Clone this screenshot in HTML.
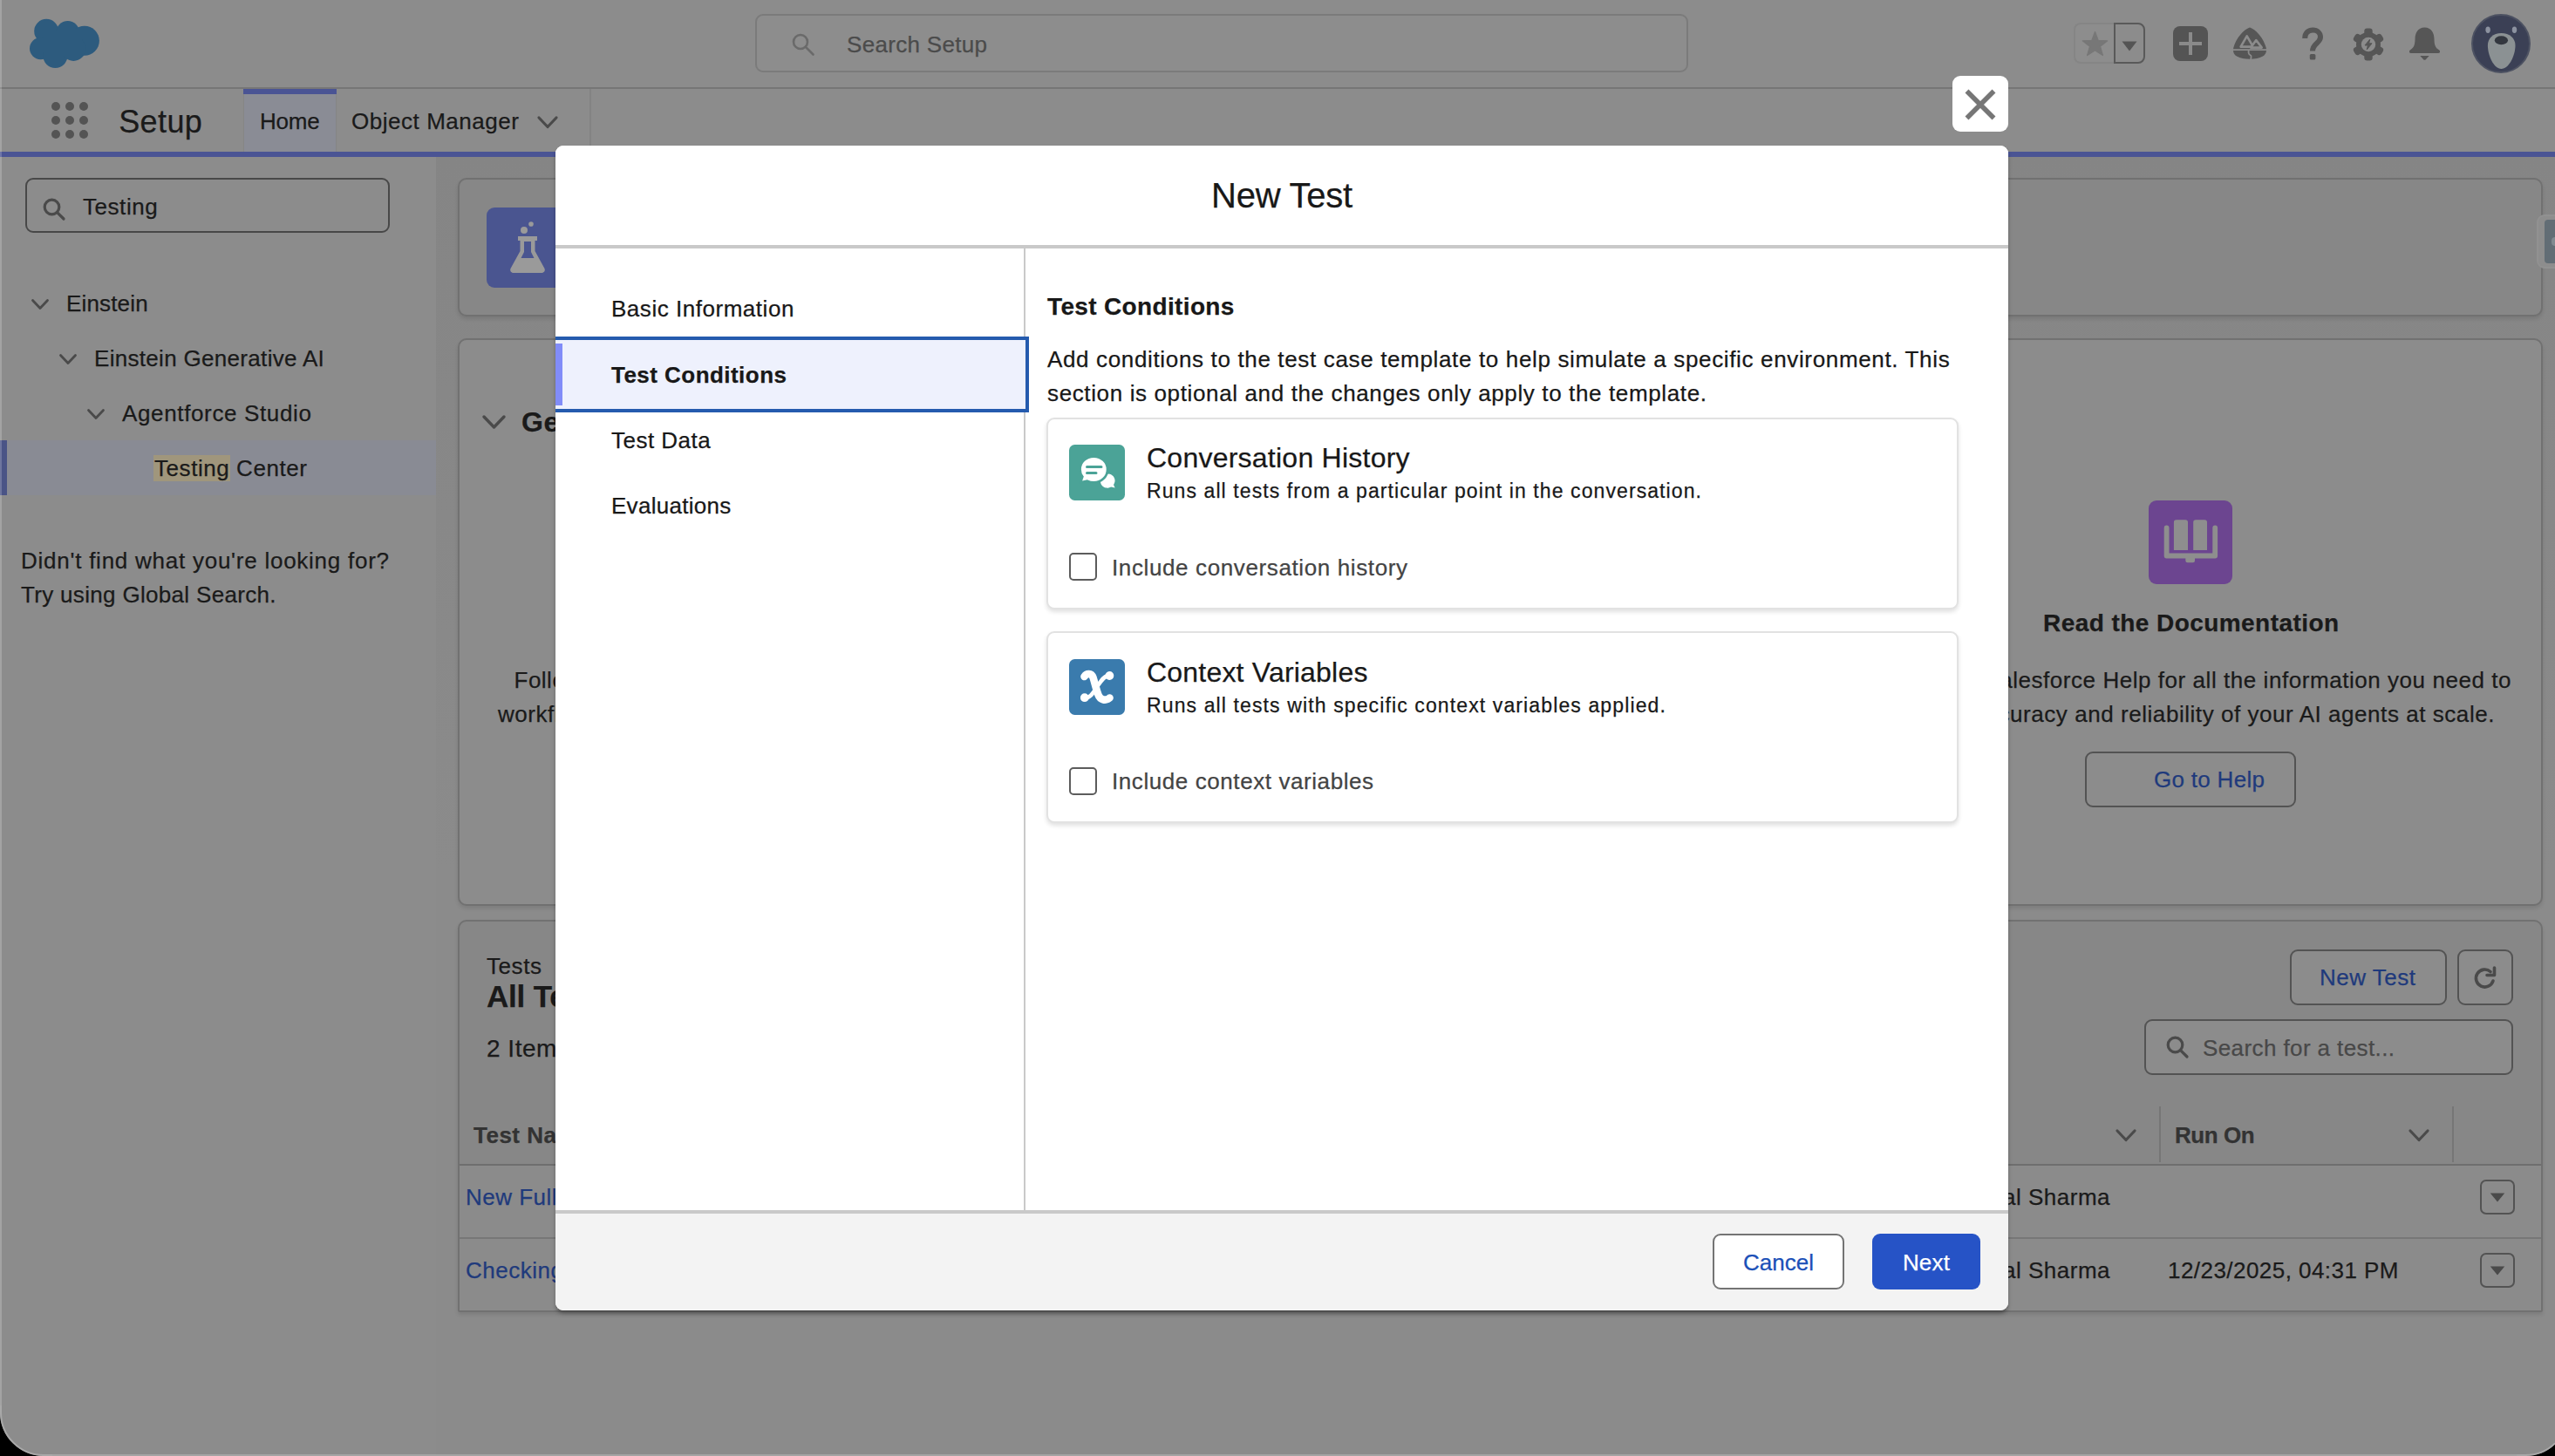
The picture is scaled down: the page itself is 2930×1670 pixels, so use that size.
<!DOCTYPE html>
<html lang="en">
<head>
<meta charset="utf-8">
<title>New Test - Testing Center | Salesforce</title>
<style>
:root{
  --bg:#8c8c8c;      /* dimmed white */
  --bg2:#8a8a8a;     /* dimmed page grey */
  --line:#717171;    /* dimmed light border */
  --dline:#464646;   /* dimmed dark border */
  --txt:#1a1a1a;     /* dimmed body text */
  --txt2:#3c3c3c;    /* dimmed secondary text */
  --ico:#565656;     /* dimmed icon grey */
  --lnk:#1f3a7c;     /* dimmed link */
  --brand:#4a5494;   /* dimmed brand purple-blue */
}
*{box-sizing:border-box;margin:0;padding:0}
html,body{width:2930px;height:1670px;overflow:hidden;background:#000}
body{font-family:"Liberation Sans",sans-serif;color:var(--txt);font-size:26px;position:relative}
#win{position:absolute;left:0;top:0;width:2930px;height:1670px;background:linear-gradient(#858585 180px,#8b8b8b 1000px);overflow:hidden}
.a{position:absolute}
.t{position:absolute;white-space:nowrap;line-height:40px;height:40px;-webkit-text-stroke:.25px currentColor}
.b{font-weight:bold}
svg{position:absolute;overflow:visible}
/* ---------- dimmed page ---------- */
#hdr{left:0;top:0;width:2930px;height:100px;background:var(--bg)}
#hdrline{left:0;top:100px;width:2930px;height:2px;background:#767676}
#nav{left:0;top:102px;width:2930px;height:72px;background:var(--bg)}
#navline{left:0;top:174px;width:2930px;height:6px;background:var(--brand)}
#side{left:0;top:180px;width:500px;height:1490px;background:var(--bg)}
.card{position:absolute;background:var(--bg);border:2px solid var(--line);border-radius:10px;box-shadow:0 3px 4px rgba(0,0,0,.10)}
/* ---------- modal ---------- */
#modal{left:637px;top:167px;width:1666px;height:1336px;background:#fff;border-radius:9px;overflow:hidden;box-shadow:0 4px 5px -1px rgba(0,0,0,.4)}
#mhead{left:0;top:0;width:1666px;height:114px;background:#fff}
#mheadline{left:0;top:114px;width:1666px;height:4px;background:#c9c9c9}
#mfoot{left:0;top:1221px;width:1666px;height:115px;background:#f3f3f3;border-top:4px solid #c9c9c9}
#mvline{left:537px;top:118px;width:2px;height:1103px;background:#c9c9c9}
.mc{border:2px solid #e2e2e2;border-radius:9px;background:#fff;box-shadow:0 3px 5px rgba(0,0,0,.12)}
.cb{width:32px;height:32px;border:2px solid #5c5c5c;border-radius:5px;background:#fff}
</style>
</head>
<body>
<div id="win">

<!-- ================= DIMMED PAGE ================= -->
<div class="a" id="hdr"></div>
<div class="a" id="hdrline"></div>
<div class="a" id="nav"></div>
<div class="a" id="navline"></div>
<div class="a" id="side"></div>

<!-- HEADER-CONTENT -->
<svg style="left:34px;top:22px" width="80" height="56" viewBox="34 22 80 56">
  <g fill="#2d5b7e">
    <circle cx="53.2" cy="35.8" r="14"/><circle cx="77.7" cy="37.5" r="13.5"/><circle cx="96.9" cy="46.8" r="17"/>
    <circle cx="46.6" cy="55.6" r="12.6"/><circle cx="63.4" cy="64.1" r="14"/><circle cx="84.3" cy="55.9" r="14"/>
    <rect x="50" y="36" width="44" height="28"/>
  </g>
</svg>
<div class="a" style="left:866px;top:16px;width:1070px;height:67px;border:2px solid #7b7b7b;border-radius:9px;background:#8d8d8d"></div>
<svg style="left:908px;top:38px" width="26" height="26" viewBox="0 0 26 26" fill="none" stroke="#6a6a6a" stroke-width="2.6"><circle cx="10" cy="10" r="8"/><path d="M16 16 L24.5 24.5" stroke-linecap="round"/></svg>
<div class="t" style="left:971px;top:31px;color:#4b4b4b;letter-spacing:0.31px">Search Setup</div>
<!-- favorites -->
<div class="a" style="left:2378px;top:26px;width:47px;height:47px;border:2px solid #858585;border-right:none;border-radius:8px 0 0 8px;background:#8d8d8d"></div>
<div class="a" style="left:2424px;top:26px;width:36px;height:47px;border:2px solid #595959;border-radius:0 8px 8px 0"></div>
<svg style="left:2386.5px;top:33px" width="31" height="34" viewBox="0 0 30 29"><path fill="#777" stroke="#777" stroke-width="1.2" stroke-linejoin="round" d="M15 1.5 L18.6 11 L28.8 11.4 L20.8 17.7 L23.6 27.6 L15 21.9 L6.4 27.6 L9.2 17.7 L1.2 11.4 L11.4 11 Z"/></svg>
<svg style="left:2433px;top:47px" width="18" height="12" viewBox="0 0 18 12"><path fill="#545454" d="M0.5 0.5 H17.5 L9 11.5 Z"/></svg>
<!-- plus -->
<div class="a" style="left:2492px;top:30px;width:40px;height:40px;border-radius:8px;background:#545454"></div>
<div class="a" style="left:2499px;top:48.3px;width:26px;height:3.4px;background:#8a8a8a"></div>
<div class="a" style="left:2510.3px;top:37px;width:3.4px;height:26px;background:#8a8a8a"></div>
<!-- trailhead -->
<svg style="left:2561px;top:32px" width="38" height="36" viewBox="0 0 38 36">
  <path fill="#565656" d="M19 -0.6 C26 1.5 35 12 37.8 23 C38.6 27.5 37 31 33.5 32.8 C27 36.8 11 36.8 4.5 32.8 C1 31 -0.6 27.5 0.2 23 C3 12 12 1.5 19 -0.6 Z"/>
  <path fill="#565656" stroke="#8c8c8c" stroke-width="2.6" stroke-linejoin="round" d="M15.7 9.3 L8.6 21.6 H22.8 Z"/>
  <path fill="#565656" stroke="#8c8c8c" stroke-width="2.6" stroke-linejoin="round" d="M26.3 14 L20.2 22.6 H32.7 Z"/>
  <path fill="none" stroke="#8c8c8c" stroke-width="1.8" d="M0 25.2 H38 M17.6 25.2 V28.5 C17.6 31.5 21 30.5 20.6 33 L20.2 36"/>
</svg>
<!-- help -->
<svg style="left:2639px;top:31px" width="26" height="39" viewBox="0 0 26 39"><path fill="none" stroke="#565656" stroke-width="6" stroke-linecap="butt" d="M4.2 13 C4.2 6.5 8.5 3.5 13.3 3.5 C18.6 3.5 22 7 22 11.5 C22 18.5 13 18.5 13 27.5"/><rect x="9.8" y="31" width="6.6" height="6.6" rx="1.6" fill="#565656"/></svg>
<!-- gear -->
<svg style="left:2698px;top:32px" width="36" height="38" viewBox="-18 -19 36 38">
  <g fill="#565656"><circle r="14"/>
  <g id="gt"><rect x="-4.7" y="-18.4" width="9.4" height="9" rx="3.2"/></g>
  <use href="#gt" transform="rotate(60)"/><use href="#gt" transform="rotate(120)"/><use href="#gt" transform="rotate(180)"/><use href="#gt" transform="rotate(240)"/><use href="#gt" transform="rotate(300)"/></g>
  <circle r="8.2" fill="#8c8c8c"/>
  <path fill="#565656" stroke="#565656" stroke-width="1" stroke-linejoin="round" d="M1.8 -6 L-4 1 H-0.6 L-1.8 6 L4 -1.2 H0.6 Z"/>
</svg>
<!-- bell -->
<svg style="left:2761px;top:31px" width="40" height="40" viewBox="0 0 40 40"><path fill="#565656" d="M19.5 0.5 C27.5 0.5 30.5 7 30.5 14 C30.5 22 33 24.5 36.3 26.6 C37.6 27.8 37.3 30 35.2 30 H3.8 C1.7 30 1.4 27.8 2.7 26.6 C6 24.5 8.5 22 8.5 14 C8.5 7 11.5 0.5 19.5 0.5 Z M14.3 33 H24.7 L20.6 37.4 C20 38 19 38 18.4 37.4 Z"/></svg>
<!-- avatar -->
<div class="a" style="left:2834px;top:16px;width:68px;height:68px;border-radius:50%;background:#3b4055;border:2px solid #4d5262;overflow:hidden">
  <svg style="left:0;top:0" width="64" height="64" viewBox="0 0 64 64">
    <ellipse cx="17.1" cy="16.3" rx="2.7" ry="3.7" fill="#8c92a0"/><ellipse cx="47.5" cy="16.3" rx="2.7" ry="3.7" fill="#8c92a0"/>
    <path fill="#8b9193" d="M32.4 20 C42 20 48.5 26 48.5 34 C48.5 46 41 61 32.4 61 C24 61 16.9 46 16.9 34 C16.9 26 23 20 32.4 20 Z"/>
    <ellipse cx="32.4" cy="28.2" rx="7.6" ry="5" fill="#33373f"/>
  </svg>
</div>

<!-- NAV-CONTENT -->
<svg style="left:59px;top:117px" width="42" height="42" viewBox="0 0 42 42" fill="#545454">
  <circle cx="5" cy="5" r="5"/><circle cx="21" cy="5" r="5"/><circle cx="37" cy="5" r="5"/>
  <circle cx="5" cy="21" r="5"/><circle cx="21" cy="21" r="5"/><circle cx="37" cy="21" r="5"/>
  <circle cx="5" cy="37" r="5"/><circle cx="21" cy="37" r="5"/><circle cx="37" cy="37" r="5"/>
</svg>
<div class="t" style="left:136.2px;top:120px;font-size:36px;letter-spacing:0.4px">Setup</div>
<div class="a" style="left:279px;top:102px;width:107px;height:72px;background:#8a8c95"></div>
<div class="a" style="left:279px;top:102px;width:107px;height:6px;background:var(--brand)"></div>
<div class="a" style="left:279px;top:108px;width:1px;height:66px;background:#858585"></div>
<div class="a" style="left:385px;top:108px;width:1px;height:66px;background:#858585"></div>
<div class="t" style="left:298px;top:119px;font-size:26px;letter-spacing:-0.19px">Home</div>
<div class="t" style="left:403px;top:119px;font-size:26px;letter-spacing:0.54px">Object Manager</div>
<svg style="left:616px;top:133px" width="24" height="15" viewBox="0 0 24 15" fill="none" stroke="#4a4a4a" stroke-width="3.2" stroke-linecap="round" stroke-linejoin="round"><path d="M2 2 L12 12.5 L22 2"/></svg>
<div class="a" style="left:676px;top:102px;width:2px;height:72px;background:#838383"></div>

<!-- SIDEBAR-CONTENT -->
<div class="a" style="left:29px;top:204px;width:418px;height:63px;border:2px solid #484848;border-radius:9px;background:#8c8c8c"></div>
<svg style="left:49px;top:227px" width="26" height="26" viewBox="0 0 26 26" fill="none" stroke="#4a4a4a" stroke-width="3.2"><circle cx="10.5" cy="10.5" r="8.3"/><path d="M16.8 16.8 L24 24" stroke-linecap="round"/></svg>
<div class="t" style="left:95px;top:217px;letter-spacing:0.55px">Testing</div>
<svg class="chev" style="left:36px;top:343px" width="20" height="13" viewBox="0 0 20 13" fill="none" stroke="#4a4a4a" stroke-width="2.8" stroke-linecap="round" stroke-linejoin="round"><path d="M1.5 1.5 L10 10.5 L18.5 1.5"/></svg>
<div class="t" style="left:76px;top:328px;letter-spacing:0.16px">Einstein</div>
<svg class="chev" style="left:68px;top:406px" width="20" height="13" viewBox="0 0 20 13" fill="none" stroke="#4a4a4a" stroke-width="2.8" stroke-linecap="round" stroke-linejoin="round"><path d="M1.5 1.5 L10 10.5 L18.5 1.5"/></svg>
<div class="t" style="left:108px;top:391px;letter-spacing:0.31px">Einstein Generative AI</div>
<svg class="chev" style="left:100px;top:469px" width="20" height="13" viewBox="0 0 20 13" fill="none" stroke="#4a4a4a" stroke-width="2.8" stroke-linecap="round" stroke-linejoin="round"><path d="M1.5 1.5 L10 10.5 L18.5 1.5"/></svg>
<div class="t" style="left:140px;top:454px;letter-spacing:0.64px">Agentforce Studio</div>
<div class="a" style="left:0;top:505px;width:500px;height:63px;background:#898b94"></div>
<div class="a" style="left:0;top:505px;width:8px;height:63px;background:#4a5486"></div>
<div class="a" style="left:176px;top:522px;width:88px;height:30px;background:#a0967c"></div>
<div class="t" style="left:177px;top:517px;letter-spacing:0.56px">Testing Center</div>
<div class="t" style="left:24px;top:623px;letter-spacing:0.75px">Didn't find what you're looking for?</div>
<div class="t" style="left:24px;top:662px;letter-spacing:0.32px">Try using Global Search.</div>

<!-- MAIN-CONTENT -->
<div class="card" style="left:525px;top:204px;width:2391px;height:159px;background:#878787"></div>
<div class="a" style="left:558px;top:238px;width:92px;height:92px;border-radius:9px;background:#4a5590"></div>
<svg style="left:582px;top:250.3px" width="46" height="64" viewBox="0 0 46 64">
  <g fill="#9a9a9a">
    <circle cx="19" cy="14" r="4"/><circle cx="27" cy="7" r="2.8"/>
    <path d="M12 21 H34 V26 H31.5 V38 L42.5 58 C43.5 60.5 42 63 39 63 H7 C4 63 2.5 60.5 3.5 58 L14.5 38 V26 H12 Z"/>
  </g>
  <path fill="#4a5590" d="M19 27 H27 V39 L30.5 46 H15.5 L19 39 Z"/>
</svg>
<div class="card" style="left:525px;top:388px;width:2391px;height:651px"></div>
<svg style="left:553px;top:476px" width="27" height="17" viewBox="0 0 27 17" fill="none" stroke="#4a4a4a" stroke-width="3.4" stroke-linecap="round" stroke-linejoin="round"><path d="M2 2 L13.5 14 L25 2"/></svg>
<div class="t b" style="left:598px;top:464px;font-size:32px;letter-spacing:.5px">Get Started</div>
<div class="t" style="left:589.5px;top:760px;letter-spacing:.5px">Follow</div>
<div class="t" style="left:571px;top:799px;letter-spacing:.5px">workflow</div>
<!-- docs tile -->
<div class="a" style="left:2464px;top:574px;width:96px;height:96px;border-radius:9px;background:#6c4590"></div>
<svg style="left:2480px;top:594px" width="64" height="52" viewBox="0 0 64 52">
  <path fill="#8e8e8e" d="M12.9 5 Q12.9 2.2 15.7 2.2 H26.2 Q29 2.2 29 5 V37 H12.9 Z M35.2 5 Q35.2 2.2 38 2.2 H48.2 Q51 2.2 51 5 V37 H35.2 Z"/>
  <path fill="none" stroke="#8e8e8e" stroke-width="5.8" stroke-linejoin="round" stroke-linecap="round" d="M4.6 11.5 V43.5 H60.2 V11.5"/>
  <path fill="#8e8e8e" d="M26.3 46 H37 V49 Q37 51.2 34.8 51.2 H28.5 Q26.3 51.2 26.3 49 Z"/>
</svg>
<div class="t b" style="left:2343px;top:695px;font-size:28px;letter-spacing:0.44px">Read the Documentation</div>
<div class="t" style="right:50px;top:760px;letter-spacing:.55px">Visit Salesforce Help for all the information you need to</div>
<div class="t" style="right:69px;top:799px;letter-spacing:.55px">ensure the accuracy and reliability of your AI agents at scale.</div>
<div class="a" style="left:2391px;top:862px;width:242px;height:64px;border:2px solid #535353;border-radius:9px"></div>
<div class="t" style="left:2470px;top:874px;color:var(--lnk);letter-spacing:0.3px">Go to Help</div>
<!-- tests card -->
<div class="card" style="left:525px;top:1055px;width:2391px;height:450px;border-radius:10px 10px 2px 2px;background:#878787"></div>
<div class="a" style="left:527px;top:1337px;width:2387px;height:166px;background:#8b8b8b"></div>
<div class="t" style="left:558px;top:1088px;letter-spacing:0.58px">Tests</div>
<div class="t b" style="left:558px;top:1123px;font-size:35px;letter-spacing:-.2px">All Tests</div>
<div class="t" style="left:558px;top:1183px;font-size:28px;letter-spacing:.5px">2 Items</div>
<div class="a" style="left:2626px;top:1089px;width:180px;height:64px;border:2px solid #535353;border-radius:9px;background:#8c8c8c"></div>
<div class="t" style="left:2660px;top:1101px;color:var(--lnk);letter-spacing:0.51px">New Test</div>
<div class="a" style="left:2818px;top:1089px;width:64px;height:64px;border:2px solid #535353;border-radius:9px;background:#8c8c8c"></div>
<svg style="left:2836px;top:1108px" width="28" height="28" viewBox="0 0 28 28" fill="none" stroke="#4a4a4a" stroke-width="3.6" stroke-linecap="round"><path d="M23 17 A10 10 0 1 1 20 6.5"/><path d="M24.5 2 V10.5 H16" stroke-linejoin="round"/></svg>
<div class="a" style="left:2459px;top:1169px;width:423px;height:64px;border:2px solid #535353;border-radius:9px;background:#8c8c8c"></div>
<svg style="left:2484px;top:1188px" width="26" height="26" viewBox="0 0 26 26" fill="none" stroke="#4a4a4a" stroke-width="3.2"><circle cx="10.5" cy="10.5" r="8.3"/><path d="M16.8 16.8 L24 24" stroke-linecap="round"/></svg>
<div class="t" style="left:2526px;top:1182px;color:#484848;letter-spacing:0.4px">Search for a test...</div>
<!-- table -->
<div class="a" style="left:527px;top:1335px;width:2387px;height:2px;background:#6e6e6e"></div>
<div class="a" style="left:527px;top:1419px;width:2387px;height:2px;background:#777"></div>
<div class="t b" style="left:543px;top:1282px;color:#333;letter-spacing:.5px">Test Name</div>
<svg style="left:2426px;top:1295px" width="24" height="15" viewBox="0 0 24 15" fill="none" stroke="#4a4a4a" stroke-width="3.2" stroke-linecap="round" stroke-linejoin="round"><path d="M2 2 L12 12.5 L22 2"/></svg>
<div class="a" style="left:2476px;top:1269px;width:2px;height:64px;background:#767676"></div>
<div class="t b" style="left:2494px;top:1282px;color:#333;letter-spacing:-0.46px">Run On</div>
<svg style="left:2762px;top:1295px" width="24" height="15" viewBox="0 0 24 15" fill="none" stroke="#4a4a4a" stroke-width="3.2" stroke-linecap="round" stroke-linejoin="round"><path d="M2 2 L12 12.5 L22 2"/></svg>
<div class="a" style="left:2812px;top:1269px;width:2px;height:64px;background:#767676"></div>
<div class="t" style="left:534px;top:1353px;color:var(--lnk);letter-spacing:.5px">New Full</div>
<div class="t" style="right:510px;top:1353px;letter-spacing:.5px">Vishal Sharma</div>
<div class="a" style="left:2844px;top:1353px;width:40px;height:40px;border:2px solid #535353;border-radius:7px"></div>
<svg style="left:2855px;top:1368px" width="18" height="11" viewBox="0 0 16 10"><path fill="#4a4a4a" d="M0.5 0.5 H15.5 L8 9.5 Z"/></svg>
<div class="t" style="left:534px;top:1437px;color:var(--lnk);letter-spacing:.5px">Checking</div>
<div class="t" style="right:510px;top:1437px;letter-spacing:.5px">Vishal Sharma</div>
<div class="t" style="left:2486px;top:1437px;letter-spacing:0.45px">12/23/2025, 04:31 PM</div>
<div class="a" style="left:2844px;top:1437px;width:40px;height:40px;border:2px solid #535353;border-radius:7px"></div>
<svg style="left:2855px;top:1452px" width="18" height="11" viewBox="0 0 16 10"><path fill="#4a4a4a" d="M0.5 0.5 H15.5 L8 9.5 Z"/></svg>
<!-- guidance tab at right edge -->
<div class="a" style="left:2909px;top:246px;width:30px;height:62px;border:2px solid #919191;border-radius:9px;background:#8d8d8d"></div>
<div class="a" style="left:2918px;top:252px;width:20px;height:50px;border-radius:4px 0 0 4px;background:#626d75"></div>
<div class="a" style="left:2926px;top:272px;width:8px;height:10px;border-radius:4px;background:#808a90"></div>

<!-- ================= MODAL ================= -->
<div class="a" id="modal">
  <div class="a" id="mhead"></div>
  <div class="a" id="mheadline"></div>
  <div class="a" id="mvline"></div>
<!-- MODAL-NAV -->
  <div class="t" style="left:64px;top:167px;color:#181818;letter-spacing:0.53px">Basic Information</div>
  <div class="a" style="left:-6px;top:219px;width:549px;height:87px;border:4px solid #255bae;background:#eef1fd"></div>
  <div class="a" style="left:0;top:227px;width:8px;height:71px;background:#818cf8"></div>
  <div class="t b" style="left:64px;top:243px;color:#181818;letter-spacing:0.46px">Test Conditions</div>
  <div class="t" style="left:64px;top:318px;color:#181818;letter-spacing:0.48px">Test Data</div>
  <div class="t" style="left:64px;top:393px;color:#181818;letter-spacing:0.28px">Evaluations</div>

<!-- MODAL-BODY -->
  <div class="t" style="left:0;width:1666px;text-align:center;top:37px;font-size:40px;color:#181818;letter-spacing:-0.25px">New Test</div>
  <div class="t b" style="left:564px;top:165px;font-size:28px;color:#181818;letter-spacing:0.35px">Test Conditions</div>
  <div class="t" style="left:564px;top:225px;color:#181818;letter-spacing:0.65px">Add conditions to the test case template to help simulate a specific environment. This</div>
  <div class="t" style="left:564px;top:264px;color:#181818;letter-spacing:0.63px">section is optional and the changes only apply to the template.</div>
  <!-- card 1 -->
  <div class="a mc" style="left:563px;top:312px;width:1046px;height:220px"></div>
  <div class="a" style="left:589px;top:343px;width:64px;height:64px;border-radius:6.5px;background:#4ba397"></div>
  <svg style="left:589px;top:343px" width="64" height="64" viewBox="0 0 64 64">
    <path fill="#fff" d="M45 33.5 C50 34 53 38 52.5 42 C52.3 43.8 51.6 45 51 46 L52.6 49.4 L48.2 48.6 C46.5 49.6 44.5 50 42.5 49.6 C38 48.8 35.5 45 36 41 Z"/>
    <path fill="#fff" stroke="#4ba397" stroke-width="2.6" d="M28.3 13.6 C37 13.6 44 20 44 28.4 C44 36.8 37 43.4 28.3 43.4 C25.6 43.4 23 42.7 20.8 41.6 L13.2 43.2 L15.4 36.8 C13.6 34.4 12.6 31.5 12.6 28.4 C12.6 20 19.6 13.6 28.3 13.6 Z"/>
    <path fill="none" stroke="#4ba397" stroke-width="3" stroke-linecap="round" d="M20.5 25.5 H37 M20.5 32.5 H31"/>
  </svg>
  <div class="t" style="left:678px;top:338px;font-size:32px;color:#181818;letter-spacing:0.24px">Conversation History</div>
  <div class="t" style="left:678px;top:376px;font-size:23px;color:#181818;letter-spacing:1.09px">Runs all tests from a particular point in the conversation.</div>
  <div class="a cb" style="left:589px;top:467px"></div>
  <div class="t" style="left:638px;top:464px;color:#444;letter-spacing:0.62px">Include conversation history</div>
  <!-- card 2 -->
  <div class="a mc" style="left:563px;top:557px;width:1046px;height:220px"></div>
  <div class="a" style="left:589px;top:589px;width:64px;height:64px;border-radius:6.5px;background:#3a7bad"></div>
  <svg style="left:589px;top:589px" width="64" height="64" viewBox="0 0 64 64" fill="none" stroke="#fff" stroke-linecap="round">
    <path stroke-width="8.6" d="M17.5 20 C 20 16, 25.5 15.5, 27.5 21 C 29.5 27, 31 34.5, 33.5 41 C 35.5 46.5, 41.5 48.5, 46.5 44.5"/>
    <path stroke-width="4.6" d="M46.5 18.6 C 40 18.5, 36 26, 32 32 C 28 38, 24 45.5, 17.5 44.6"/>
    <circle cx="46.4" cy="19" r="3.2" stroke-width="3.4" fill="#fff"/><circle cx="17.8" cy="44.2" r="3.2" stroke-width="3.4" fill="#fff"/>
  </svg>
  <div class="t" style="left:678px;top:584px;font-size:32px;color:#181818;letter-spacing:0.2px">Context Variables</div>
  <div class="t" style="left:678px;top:622px;font-size:23px;color:#181818;letter-spacing:1.12px">Runs all tests with specific context variables applied.</div>
  <div class="a cb" style="left:589px;top:713px"></div>
  <div class="t" style="left:638px;top:709px;color:#444;letter-spacing:0.58px">Include context variables</div>

  <div class="a" id="mfoot"></div>
<!-- MODAL-FOOT -->
  <div class="a" style="left:1327px;top:1248px;width:151px;height:64px;border:2px solid #747474;border-radius:9px;background:#fff"></div>
  <div class="t" style="left:1327px;width:151px;text-align:center;top:1261px;color:#1b50b8;letter-spacing:0.01px">Cancel</div>
  <div class="a" style="left:1510px;top:1248px;width:124px;height:64px;border-radius:9px;background:#2653c6"></div>
  <div class="t" style="left:1510px;width:124px;text-align:center;top:1261px;color:#fff;letter-spacing:0.18px">Next</div>
</div>

<!-- CLOSE-BUTTON -->
<div class="a" style="left:2239px;top:87px;width:64px;height:64px;border-radius:9px;background:#fff"></div>
<svg style="left:2254px;top:103px" width="34" height="34" viewBox="0 0 34 34" fill="none" stroke="#767676" stroke-width="5.6" stroke-linecap="butt"><path d="M1.5 1.5 L32.5 32.5 M32.5 1.5 L1.5 32.5"/></svg>

<!-- window edges / corners -->
<div class="a" style="left:0;top:0;width:2px;height:1622px;background:rgba(255,255,255,.2)"></div>
<div class="a" style="left:48px;top:1668px;width:2850px;height:2px;background:#a4a4a4"></div>
<svg style="left:0;top:1570px" width="2930" height="100" viewBox="0 1570 2930 100">
  <path fill="#000" d="M0 1620 A50 50 0 0 0 50 1670 L0 1670 Z"/>
  <path fill="none" stroke="#a8a8a8" stroke-width="2" d="M1 1612 V1620 A49 49 0 0 0 50 1669 H60"/>
  <path fill="#000" d="M2896 1670 A50 50 0 0 0 2930 1656.6 L2930 1670 Z"/>
  <path fill="none" stroke="#a8a8a8" stroke-width="2" d="M2886 1669 H2896 A49 49 0 0 0 2930 1655.4"/>
</svg>

</div>
</body>
</html>
